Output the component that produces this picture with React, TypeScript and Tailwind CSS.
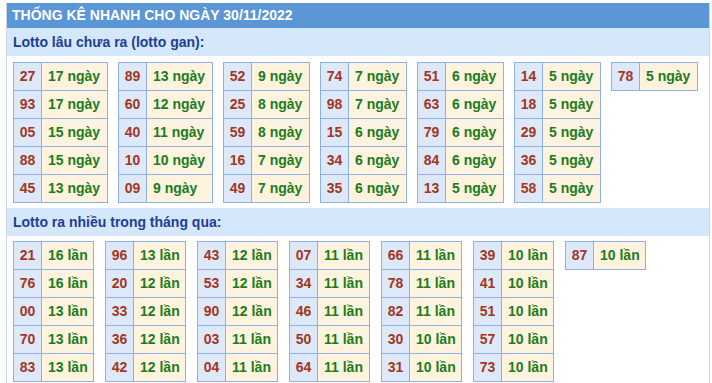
import React from 'react';

type Item = [string, string];

const gan: Item[][] = [
    [['27', '17'], ['93', '17'], ['05', '15'], ['88', '15'], ['45', '13']],
    [['89', '13'], ['60', '12'], ['40', '11'], ['10', '10'], ['09', '9']],
    [['52', '9'], ['25', '8'], ['59', '8'], ['16', '7'], ['49', '7']],
    [['74', '7'], ['98', '7'], ['15', '6'], ['34', '6'], ['35', '6']],
    [['51', '6'], ['63', '6'], ['79', '6'], ['84', '6'], ['13', '5']],
    [['14', '5'], ['18', '5'], ['29', '5'], ['36', '5'], ['58', '5']],
    [['78', '5']],
];

const nhieu: Item[][] = [
    [['21', '16'], ['76', '16'], ['00', '13'], ['70', '13'], ['83', '13']],
    [['96', '13'], ['20', '12'], ['33', '12'], ['36', '12'], ['42', '12']],
    [['43', '12'], ['53', '12'], ['90', '12'], ['03', '11'], ['04', '11']],
    [['07', '11'], ['34', '11'], ['46', '11'], ['50', '11'], ['64', '11']],
    [['66', '11'], ['78', '11'], ['82', '11'], ['30', '10'], ['31', '10']],
    [['39', '10'], ['41', '10'], ['51', '10'], ['57', '10'], ['73', '10']],
    [['87', '10']],
];

// bảng nhỏ: cột số + cột ngày/lần
function LotoTable({ rows, unit, dayW }: { rows: Item[]; unit: string; dayW: string }) {
    return (
        <div className="border-t border-l border-[#8fb0e3]">
            {rows.map(([so, n]) => (
                <div key={so} className="flex h-[28px] leading-[27px]">
                    <div className="w-[28px] border-r border-b border-[#8fb0e3] bg-[#dde9f9] text-center text-[#a3361d]">{so}</div>
                    <div className={`${dayW} border-r border-b border-[#8fb0e3] bg-[#fdf3de] pl-[6px] text-[#1c7c1c]`}>{n} {unit}</div>
                </div>
            ))}
        </div>
    );
}

export default function App() {
    return (
        <div className="h-[383px] overflow-hidden bg-white pt-[3px]" style={{ fontFamily: '"Liberation Sans", Arial, sans-serif' }}>
            <div className="ml-[6px] h-[400px] w-[704px] border-x border-[#cfd6de]">
                <div className="h-[25px] bg-[#5b96d6] pl-[5px] text-[14px] font-bold leading-[25px] text-white">
                    THỐNG KÊ NHANH CHO NGÀY 30/11/2022
                </div>
                <div className="h-[28px] bg-[#d4e7fb] pl-[6px] text-[14px] font-bold leading-[28px] text-[#1d3f93]">
                    Lotto lâu chưa ra (lotto gan):
                </div>
                <div className="flex items-start gap-[10px] pb-[5px] pl-[6px] pt-[6px] text-[14px] font-bold">
                    {gan.map((col, i) => (
                        <LotoTable key={i} rows={col} unit="ngày" dayW={i < 2 ? 'w-[66px]' : 'w-[58px]'} />
                    ))}
                </div>
                <div className="h-[28px] bg-[#d4e7fb] pl-[6px] text-[14px] font-bold leading-[28px] text-[#1d3f93]">
                    Lotto ra nhiều trong tháng qua:
                </div>
                <div className="flex items-start gap-[11px] pl-[6px] pt-[5px] text-[14px] font-bold">
                    {nhieu.map((col, i) => (
                        <LotoTable key={i} rows={col} unit="lần" dayW="w-[52px]" />
                    ))}
                </div>
            </div>
        </div>
    );
}
